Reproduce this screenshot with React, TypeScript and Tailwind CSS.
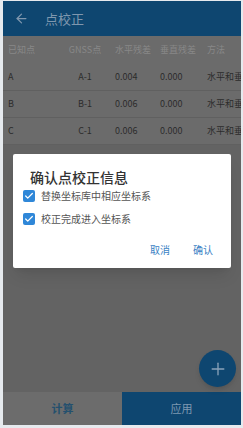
import { ArrowLeft, Check, Plus } from 'lucide-react'

const rows = [
  { known: 'A', gnss: 'A-1', h: '0.004', v: '0.000', method: '水平和垂直' },
  { known: 'B', gnss: 'B-1', h: '0.006', v: '0.000', method: '水平和垂直' },
  { known: 'C', gnss: 'C-1', h: '0.006', v: '0.000', method: '水平和垂直' },
]

const cols = 'grid grid-cols-[59px_46px_45px_47px_1fr] items-center'

export default function App() {
  return (
    <div
      className="w-[243px] h-[428px] bg-[#e6eaee] pl-[3px] pt-px pr-[2px] pb-[3px]"
      style={{ fontFamily: '"Noto Sans CJK SC", "Noto Sans", sans-serif' }}
    >
      <div className="relative flex h-full flex-col overflow-hidden bg-[#636363]">
        <div className="flex h-[35px] shrink-0 items-center bg-[#0e4670] pl-[11px]">
          <ArrowLeft size={15} strokeWidth={2} className="text-[#7f97ae]" />
          <span className="ml-[16px] text-[13px] text-[#7f97ae]">点校正</span>
        </div>

        <div className="bg-[#6b6b6b]">
          <div className={`${cols} h-[28px] text-[9px] text-[#888888]`}>
            <span className="pl-[5px]">已知点</span>
            <span className="text-center">GNSS点</span>
            <span className="pl-[7px]">水平残差</span>
            <span className="pl-[7px]">垂直残差</span>
            <span className="pl-[7px]">方法</span>
          </div>
          {rows.map((row) => (
            <div key={row.known} className={`${cols} h-[27px] border-b border-[#606060] text-[9px] text-[#2c2c2c]`}>
              <span className="pl-[5px]">{row.known}</span>
              <span className="text-center">{row.gnss}</span>
              <span className="pl-[7px]">{row.h}</span>
              <span className="pl-[7px]">{row.v}</span>
              <span className="overflow-hidden whitespace-nowrap pl-[7px]">{row.method}</span>
            </div>
          ))}
        </div>

        <div className="flex-1" />

        <div className="flex h-[33px] shrink-0">
          <button className="flex flex-1 items-center justify-center bg-[#6c6c6c] text-[11px] font-bold text-[#24506e]">计算</button>
          <button className="flex flex-1 items-center justify-center bg-[#0e4670] text-[11px] text-[#7f98b0]">应用</button>
        </div>

        <button className="absolute left-[196px] top-[349px] flex h-[37px] w-[37px] items-center justify-center rounded-full bg-[#0e4670] shadow-md">
          <Plus size={20} strokeWidth={1.6} className="text-[#8aa2b9]" />
        </button>

        <div className="absolute left-[10px] top-[153px] h-[114px] w-[218px] rounded-[2px] bg-white shadow-lg">
          <div className="pl-[17px] pt-[14px] text-[14px] font-medium leading-[18px] text-[#333333]">确认点校正信息</div>
          <div className="mt-[4px] flex flex-col gap-[11px] pl-[10px]">
            <label className="flex h-[12px] items-center gap-[6px]">
              <span className="flex h-[12px] w-[12px] items-center justify-center rounded-[2px] bg-[#2f87d8]">
                <Check size={10} strokeWidth={3} className="text-white" />
              </span>
              <span className="text-[10px] leading-[12px] text-[#555555]">替换坐标库中相应坐标系</span>
            </label>
            <label className="flex h-[12px] items-center gap-[6px]">
              <span className="flex h-[12px] w-[12px] items-center justify-center rounded-[2px] bg-[#2f87d8]">
                <Check size={10} strokeWidth={3} className="text-white" />
              </span>
              <span className="text-[10px] leading-[12px] text-[#555555]">校正完成进入坐标系</span>
            </label>
          </div>
          <div className="absolute bottom-[11px] right-[18px] flex gap-[23px] text-[10px] text-[#3a7fc4]">
            <span>取消</span>
            <span>确认</span>
          </div>
        </div>
      </div>
    </div>
  )
}
